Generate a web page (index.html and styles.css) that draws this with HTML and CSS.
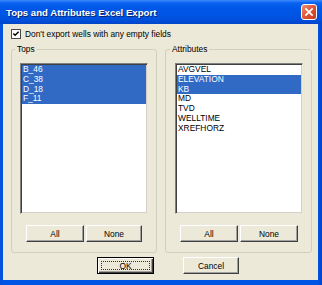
FILE: index.html
```html
<!DOCTYPE html>
<html>
<head>
<meta charset="utf-8">
<link rel="stylesheet" href="styles.css">
</head>
<body>
<div class="window">
  <div class="titlebar">
    <span class="title">Tops and Attributes Excel Export</span>
    <span class="close">
      <svg width="16" height="16" viewBox="0 0 16 16"><path d="M4.5 4.5 L11.5 11.5 M11.5 4.5 L4.5 11.5" stroke="#fff" stroke-width="2" stroke-linecap="square"/></svg>
    </span>
  </div>
  <div class="client">
    <div class="check-row">
      <span class="checkbox"><svg width="9" height="9" viewBox="0 0 9 9"><path d="M1.5 4 L3.5 6 L7.5 2" fill="none" stroke="#000" stroke-width="1.6"/></svg></span>
      <span class="check-label">Don't export wells with any empty fields</span>
    </div>
    <div class="groups">
      <fieldset class="group group-tops">
        <legend>Tops</legend>
        <div class="list">
          <div class="item sel">B_46</div>
          <div class="item sel">C_38</div>
          <div class="item sel">D_18</div>
          <div class="item sel">F_11</div>
        </div>
        <div class="btn-row">
          <button class="btn btn-all">All</button>
          <button class="btn btn-none">None</button>
        </div>
      </fieldset>
      <fieldset class="group group-attr">
        <legend>Attributes</legend>
        <div class="list">
          <div class="item">AVGVEL</div>
          <div class="item sel">ELEVATION</div>
          <div class="item sel">KB</div>
          <div class="item">MD</div>
          <div class="item">TVD</div>
          <div class="item">WELLTIME</div>
          <div class="item">XREFHORZ</div>
        </div>
        <div class="btn-row">
          <button class="btn btn-all">All</button>
          <button class="btn btn-none2">None</button>
        </div>
      </fieldset>
    </div>
    <div class="footer">
      <button class="btn btn-ok"><span class="focus">OK</span></button>
      <button class="btn btn-cancel">Cancel</button>
    </div>
  </div>
</div>
</body>
</html>
```
FILE: styles.css
```css
html, body {
  margin: 0;
  padding: 0;
  background: #0046d5;
}
body {
  font-family: "Liberation Sans", Arial, sans-serif;
  font-size: 8.4px;
  color: #000;
}
.window {
  width: 322px;
  height: 285px;
  display: flex;
  flex-direction: column;
  background: linear-gradient(90deg, #0a4fd8 0, #0055e5 3px, #0055e5 318px, #0043c8 322px);
  overflow: hidden;
}
.titlebar {
  height: 24px;
  flex: none;
  display: flex;
  align-items: center;
  justify-content: space-between;
  padding: 0 5px 0 6px;
  background: linear-gradient(#3d8bff 0, #0a62f0 3px, #0058e8 8px, #0055e5 14px, #0050dc 20px, #0044c8 24px);
}
.title {
  color: #fff;
  font-weight: bold;
  font-size: 9.6px;
  text-shadow: 1px 1px 0 #0a246a;
  margin-top: 1px;
}
.close {
  width: 14px;
  height: 14px;
  border: 1px solid #fff;
  border-radius: 3px;
  background: linear-gradient(135deg, #ec9274 0, #e2583a 45%, #c8391a 100%);
  display: flex;
  align-items: center;
  justify-content: center;
}
.close svg {
  width: 14px;
  height: 14px;
}
.client {
  flex: 1;
  margin: 0 4px 5px 3px;
  background: #ece9d8;
  display: flex;
  flex-direction: column;
}
.check-row {
  height: 10px;
  margin-top: 5px;
  padding-left: 8px;
  display: flex;
  align-items: center;
  gap: 4px;
}
.checkbox {
  width: 8px;
  height: 8px;
  border: 1px solid #4a4a4a;
  background: #fff;
  display: flex;
}
.checkbox svg {
  width: 8px;
  height: 8px;
}
.check-label {
  line-height: 10px;
}
.groups {
  margin-top: 5px;
  padding-left: 8px;
  display: flex;
  gap: 8px;
}
.group {
  margin: 0;
  border: 1px solid #d0d0bf;
  border-radius: 3px;
  padding: 9px 8px 10px 8px;
  min-width: 0;
}
.group-tops {
  width: 146px;
  box-sizing: border-box;
}
.group-attr {
  width: 147px;
  box-sizing: border-box;
  padding-left: 9px;
}
.group legend {
  padding: 0 2px;
  margin-left: -5px;
  line-height: 10px;
  height: 10px;
}
.list {
  width: 128px;
  height: 151px;
  box-sizing: border-box;
  background: #fff;
  border: 1px solid;
  border-color: #808080 #ece9d8 #ece9d8 #808080;
  box-shadow: inset 1px 1px 0 #404040, inset -1px -1px 0 #d4d0c8;
  padding: 1px 1px 0 1px;
  overflow: hidden;
}
.item {
  height: 9.75px;
  line-height: 9.75px;
  padding-left: 1px;
  white-space: nowrap;
}
.item.sel {
  background: #316ac5;
  color: #fff;
}
.btn-row {
  margin-top: 11px;
  display: flex;
  justify-content: center;
  gap: 2px;
}
.btn {
  height: 17px;
  margin: 0;
  padding: 0;
  box-sizing: border-box;
  font-family: "Liberation Sans", Arial, sans-serif;
  font-size: 8.4px;
  color: #000;
  background: #ece9d8;
  border: 1px solid;
  border-color: #fff #404040 #404040 #fff;
  box-shadow: inset -1px -1px 0 #a0a0a0;
  display: flex;
  align-items: center;
  justify-content: center;
}
.btn-all { width: 58px; }
.btn-none { width: 56px; }
.btn-none2 { width: 58px; }
.footer {
  margin-top: 4px;
  padding-left: 94px;
  display: flex;
  gap: 29px;
}
.btn-ok {
  width: 57px;
  border: 1px solid #000;
  box-shadow: inset 1px 1px 0 #fff, inset -1px -1px 0 #404040, inset -2px -2px 0 #a0a0a0;
  padding: 3px;
}
.btn-ok .focus {
  flex: 1;
  align-self: stretch;
  display: flex;
  align-items: center;
  justify-content: center;
  border: 1px dotted #333;
}
.btn-cancel {
  width: 56px;
}
```
